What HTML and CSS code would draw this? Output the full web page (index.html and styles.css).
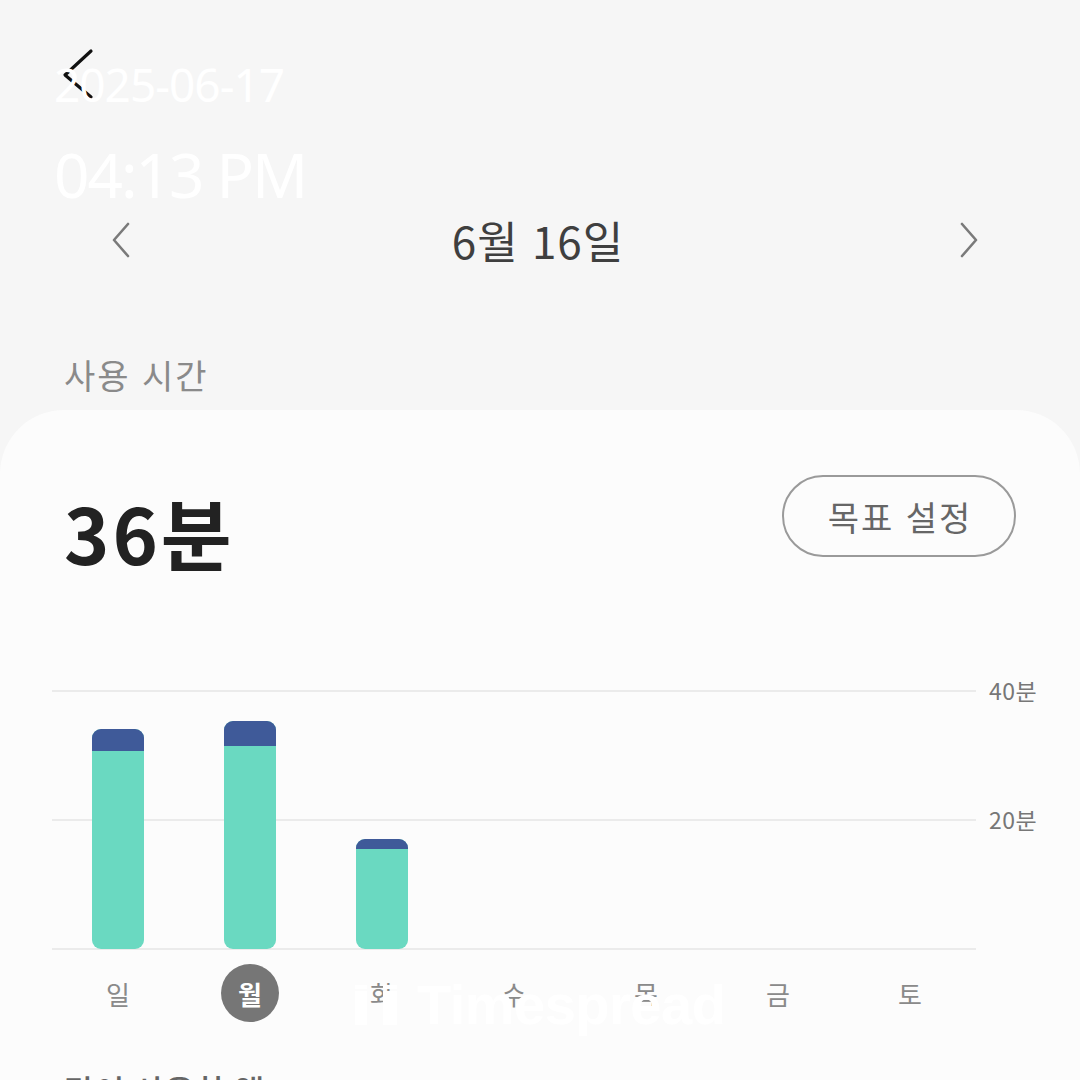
FILE: index.html
```html
<!DOCTYPE html>
<html lang="ko">
<head>
  <meta charset="UTF-8" />
  <title>사용 시간</title>
  <meta name="viewport" content="width=device-width, initial-scale=1.0" />
  <link rel="stylesheet" href="styles.css">
</head>
<body>

<div class="screen">
  <div class="appbar">
    <svg class="back" width="40" height="56" viewBox="0 0 40 56">
      <path d="M33 3 L7 27 L33 49" fill="none" stroke="#111" stroke-width="3.2" stroke-linecap="round" stroke-linejoin="round" />
    </svg>
  </div>

  <div class="date-nav">
    <svg class="chev" width="30" height="40" viewBox="0 0 30 40">
      <path d="M22 4 L8 20 L22 36" fill="none" stroke="#7a7a7a" stroke-width="2.6" stroke-linecap="round" stroke-linejoin="round" />
    </svg>
    <span class="date-label">6월 16일</span>
    <svg class="chev" width="30" height="40" viewBox="0 0 30 40">
      <path d="M8 4 L22 20 L8 36" fill="none" stroke="#7a7a7a" stroke-width="2.6" stroke-linecap="round" stroke-linejoin="round" />
    </svg>
  </div>

  <h2 class="section-title">사용 시간</h2>

  <div class="card">
    <div class="summary">
      <div class="total">36분</div>
      <button class="goal-btn">목표 설정</button>
    </div>

    <div class="chart">
      <div class="plot">
        <div class="col">
          <div class="bar" style="height:220px"><div class="bar-top" style="height:22px"></div></div>
        </div>
        <div class="col">
          <div class="bar" style="height:228px"><div class="bar-top" style="height:25px"></div></div>
        </div>
        <div class="col">
          <div class="bar" style="height:110px"><div class="bar-top" style="height:10px"></div></div>
        </div>
        <div class="col"></div>
        <div class="col"></div>
        <div class="col"></div>
        <div class="col"></div>
      </div>
      <div class="axis">
        <span class="tick">40분</span>
        <span class="tick">20분</span>
      </div>
    </div>

    <div class="days">
      <span class="day">일</span>
      <span class="day"><span class="today">월</span></span>
      <span class="day">화</span>
      <span class="day">수</span>
      <span class="day">목</span>
      <span class="day">금</span>
      <span class="day">토</span>
    </div>

    <h2 class="list-title">많이 사용한 앱</h2>
  </div>

  <div class="stamp">
    <div class="stamp-date">2025-06-17</div>
    <div class="stamp-time">04:13 PM</div>
  </div>

  <div class="watermark">
    <svg width="44" height="40" viewBox="0 0 44 40">
      <rect x="0" y="6" width="12" height="34" fill="#fff" />
      <rect x="28" y="6" width="14" height="34" fill="#fff" />
      <rect x="0" y="0" width="12" height="4" fill="#fff" />
      <rect x="28" y="0" width="14" height="4" fill="#fff" />
    </svg>
    <span>Timespread</span>
  </div>
</div>

</body>
</html>
```

FILE: styles.css
```css
body {
  margin: 0;
  background: #f6f6f6;
  font-family: "Noto Sans CJK KR", "Noto Sans", sans-serif;
  color: #444;
}
.screen {
  position: relative;
  width: 1080px;
  height: 1080px;
  overflow: hidden;
}
.appbar {
  height: 200px;
  box-sizing: border-box;
  padding: 48px 0 0 58px;
}
.back { display: block; }
.date-nav {
  height: 80px;
  display: flex;
  align-items: center;
  justify-content: space-between;
  padding: 0 96px 0 106px;
}
.chev { display: block; }
.date-label {
  font-size: 44px;
  font-weight: 400;
  color: #3f3f3f;
  letter-spacing: 1px;
  margin-right: 14px;
}
.section-title {
  margin: 74px 0 15px 64px;
  font-size: 34px;
  font-weight: 400;
  line-height: 41px;
  color: #8a8a8a;
  letter-spacing: 2px;
}
.card {
  background: #fcfcfc;
  border-radius: 64px 64px 0 0;
  padding-top: 65px;
  height: 700px;
}
.summary {
  display: flex;
  justify-content: space-between;
  align-items: flex-start;
  padding: 0 64px;
}
.total {
  margin-top: 19px;
  font-size: 77px;
  line-height: 76px;
  font-weight: 700;
  color: #222;
  letter-spacing: 3px;
}
.goal-btn {
  width: 234px;
  height: 82px;
  border: 2px solid #9a9a9a;
  border-radius: 41px;
  background: transparent;
  font-family: "Noto Sans CJK KR", sans-serif;
  font-size: 34px;
  color: #666;
  letter-spacing: 2px;
  padding: 0 0 0 2px;
}
.chart {
  display: flex;
  margin-top: 120px;
  padding-left: 52px;
}
.plot {
  width: 924px;
  height: 260px;
  display: flex;
  align-items: flex-end;
  background: repeating-linear-gradient(to bottom, #ebebeb 0, #ebebeb 2px, transparent 2px, transparent 129px);
}
.col {
  width: 132px;
  display: flex;
  justify-content: center;
}
.bar {
  width: 52px;
  border-radius: 9px;
  overflow: hidden;
  background: #6ad9c1;
  margin-bottom: 1px;
}
.bar-top {
  background: #3f5a99;
}
.axis {
  display: flex;
  flex-direction: column;
  margin-left: 13px;
}
.tick {
  height: 30px;
  line-height: 30px;
  font-size: 23px;
  color: #777;
  letter-spacing: 0.5px;
}
.tick:first-child { margin-top: -15px; }
.tick + .tick { margin-top: 99px; }
.days {
  display: flex;
  padding-left: 52px;
  margin-top: 14px;
}
.day {
  width: 132px;
  height: 58px;
  display: flex;
  align-items: center;
  justify-content: center;
  font-size: 26px;
  color: #8a8a8a;
}
.today {
  width: 58px;
  height: 58px;
  border-radius: 50%;
  background: #767676;
  color: #fff;
  font-weight: 700;
  display: flex;
  align-items: center;
  justify-content: center;
}
.list-title {
  margin: 48px 0 0 64px;
  font-size: 33px;
  font-weight: 500;
  line-height: 41px;
  color: #666;
}
.stamp {
  position: absolute;
  left: 54px;
  top: 56px;
  color: #fff;
  font-family: "Noto Sans", sans-serif;
  font-weight: 400;
}
.stamp-date {
  font-size: 46px;
  line-height: 56px;
  letter-spacing: -1px;
}
.stamp-time {
  margin-top: 24px;
  font-size: 62px;
  line-height: 76px;
  letter-spacing: -2px;
}
.watermark {
  position: absolute;
  left: 355px;
  top: 972px;
  display: flex;
  align-items: center;
  gap: 18px;
  color: #fff;
  font-family: "Liberation Sans", Arial, sans-serif;
  font-weight: 700;
  font-size: 56px;
  letter-spacing: -0.5px;
}
.watermark svg { display: block; }
```
